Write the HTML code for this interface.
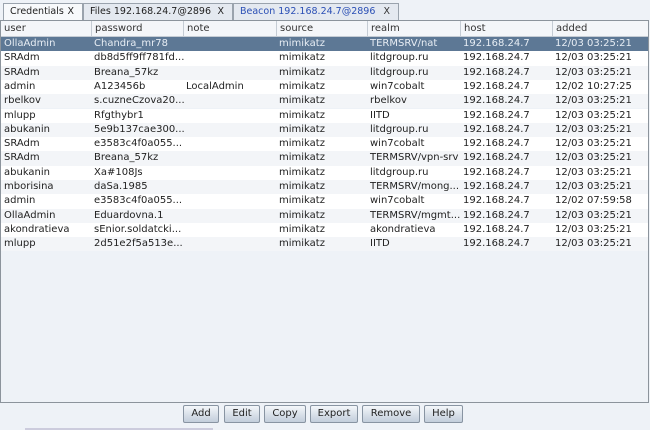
<!DOCTYPE html>
<html><head><style>
*{margin:0;padding:0;box-sizing:border-box}
body{width:650px;height:430px;background:#eef2f7;font-family:"DejaVu Sans","Liberation Sans",sans-serif;font-size:10px;color:#222;position:relative;overflow:hidden}
.tab{position:absolute;top:3px;height:17px;border:1px solid #9aa3ad;border-bottom:none;font-size:9.5px;line-height:15px;padding-left:6px;background:#e4e9f0;white-space:nowrap}
.tab span{position:absolute;right:8px;top:0;font-size:9.5px}
.tbl{position:absolute;left:0;top:20px;width:649px;height:383px;border:1px solid #8c949c;background:#eef2f7}
.hdr{position:absolute;left:0;top:0;width:647px;height:16px;background:#f4f6f9;border-bottom:1px solid #c5ccd4}
.hdr div{position:absolute;top:0;height:16px;line-height:15px;padding-left:3px;border-left:1px solid #c5ccd4;color:#333}
.row{position:absolute;left:0;width:647px;height:14.3px;line-height:14px}
.row div{position:absolute;top:0;white-space:nowrap;color:#222}
.sel{background:#5d7895}
.sel div{color:#e7edf4!important}
.alt{background:#f3f5f8}
.w{background:#fff}
.btn{position:absolute;top:405px;height:18px;border:1px solid #8894a2;border-radius:2px;background:linear-gradient(#f4f7fa,#d5dde7 60%,#c3cedb);font-size:10px;line-height:16px;text-align:center;color:#222}
</style></head><body>
<div class="tab" style="left:3px;width:80px;background:#f7f9fb;height:18px">Credentials<span>X</span></div>
<div class="tab" style="left:83px;width:150px">Files 192.168.24.7@2896<span>X</span></div>
<div class="tab" style="left:233px;width:166px;color:#2a4fb5">Beacon 192.168.24.7@2896<span style="color:#333">X</span></div>
<div class="tbl">
<div class="hdr">
<div style="left:0;border-left:none">user</div>
<div style="left:90px">password</div>
<div style="left:182px">note</div>
<div style="left:275px">source</div>
<div style="left:366px">realm</div>
<div style="left:459px">host</div>
<div style="left:551px">added</div>
</div>
<div id="rows"></div>
</div>
<script>
var d=[["OllaAdmin","Chandra_mr78","","mimikatz","TERMSRV/nat","192.168.24.7","12/03 03:25:21"],
["SRAdm","db8d5ff9ff781fd...","","mimikatz","litdgroup.ru","192.168.24.7","12/03 03:25:21"],
["SRAdm","Breana_57kz","","mimikatz","litdgroup.ru","192.168.24.7","12/03 03:25:21"],
["admin","A123456b","LocalAdmin","mimikatz","win7cobalt","192.168.24.7","12/02 10:27:25"],
["rbelkov","s.cuzneCzova20...","","mimikatz","rbelkov","192.168.24.7","12/03 03:25:21"],
["mlupp","Rfgthybr1","","mimikatz","IITD","192.168.24.7","12/03 03:25:21"],
["abukanin","5e9b137cae300...","","mimikatz","litdgroup.ru","192.168.24.7","12/03 03:25:21"],
["SRAdm","e3583c4f0a055...","","mimikatz","win7cobalt","192.168.24.7","12/03 03:25:21"],
["SRAdm","Breana_57kz","","mimikatz","TERMSRV/vpn-srv","192.168.24.7","12/03 03:25:21"],
["abukanin","Xa#108Js","","mimikatz","litdgroup.ru","192.168.24.7","12/03 03:25:21"],
["mborisina","daSa.1985","","mimikatz","TERMSRV/mong...","192.168.24.7","12/03 03:25:21"],
["admin","e3583c4f0a055...","","mimikatz","win7cobalt","192.168.24.7","12/02 07:59:58"],
["OllaAdmin","Eduardovna.1","","mimikatz","TERMSRV/mgmt...","192.168.24.7","12/03 03:25:21"],
["akondratieva","sEnior.soldatcki...","","mimikatz","akondratieva","192.168.24.7","12/03 03:25:21"],
["mlupp","2d51e2f5a513e...","","mimikatz","IITD","192.168.24.7","12/03 03:25:21"]];
var x=[3,93,185,278,369,462,554],h="";
d.forEach(function(r,i){h+='<div class="row '+(i==0?'sel':(i%2?'w':'alt'))+'" style="top:'+(16+i*14.3)+'px">';
r.forEach(function(c,j){h+='<div style="left:'+x[j]+'px">'+c.replace(/&/g,"&amp;")+'</div>'});h+='</div>'});
document.getElementById('rows').innerHTML=h;
</script>
<div class="btn" style="left:183px;width:36px">Add</div>
<div class="btn" style="left:224px;width:36px">Edit</div>
<div class="btn" style="left:264px;width:42px">Copy</div>
<div class="btn" style="left:310px;width:48px">Export</div>
<div class="btn" style="left:362px;width:58px">Remove</div>
<div class="btn" style="left:424px;width:39px">Help</div>
<div style="position:absolute;left:25px;top:428px;width:188px;height:2px;background:#fff;border:1px solid #ccd"></div>
</body></html>
